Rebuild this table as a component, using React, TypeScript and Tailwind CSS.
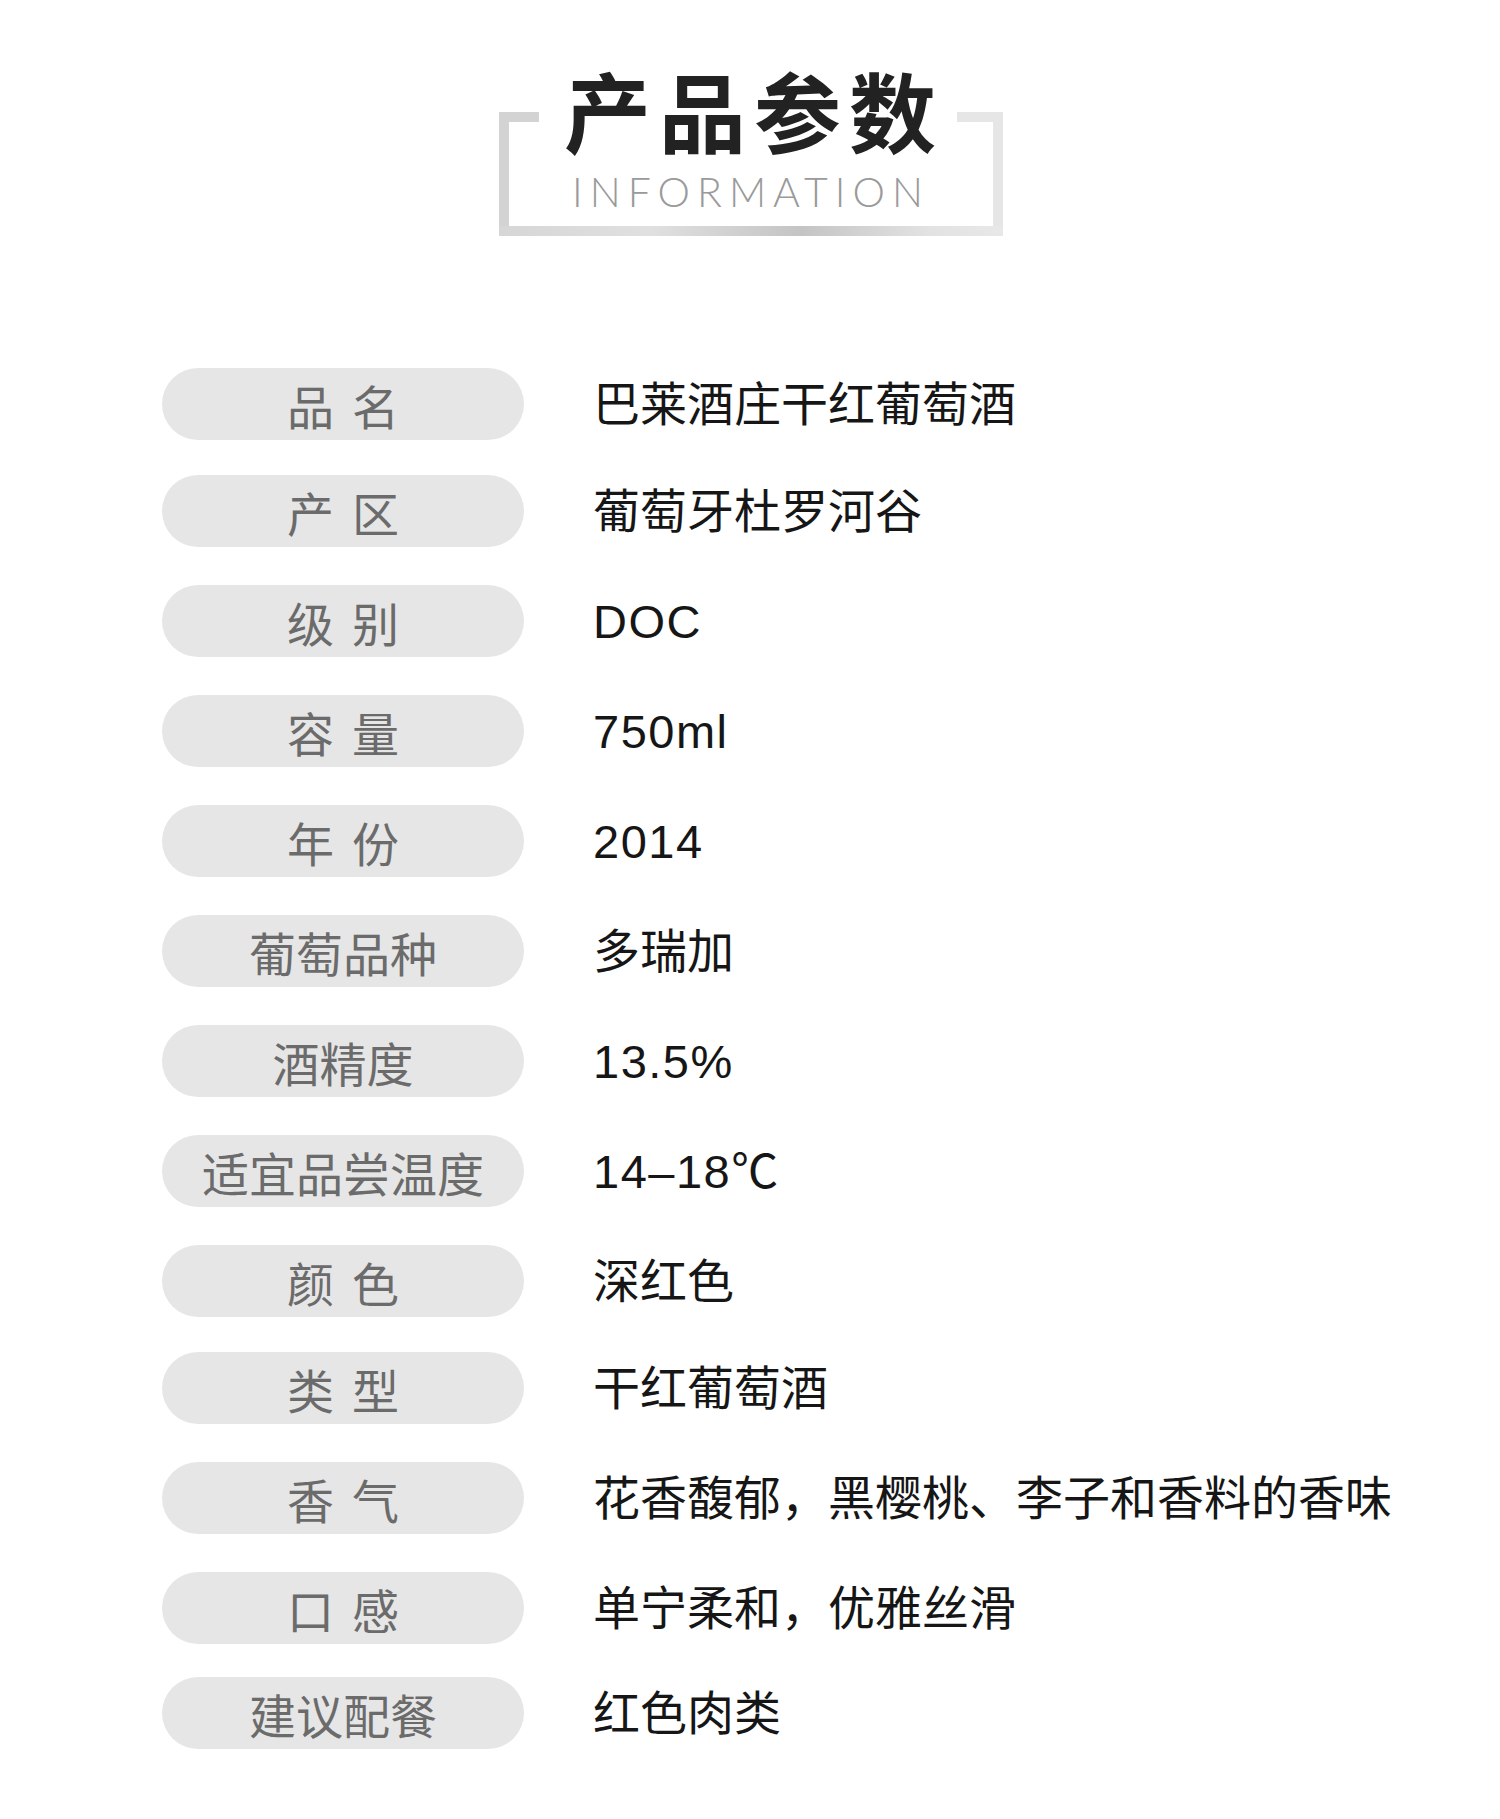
import React from "react";

const rows: { label: string; value: string; mt: number; latin?: boolean }[] = [
  { label: "品名", value: "巴莱酒庄干红葡萄酒", mt: 0 },
  { label: "产区", value: "葡萄牙杜罗河谷", mt: 35 },
  { label: "级别", value: "DOC", mt: 38, latin: true },
  { label: "容量", value: "750ml", mt: 38, latin: true },
  { label: "年份", value: "2014", mt: 38, latin: true },
  { label: "葡萄品种", value: "多瑞加", mt: 38 },
  { label: "酒精度", value: "13.5%", mt: 38, latin: true },
  { label: "适宜品尝温度", value: "14–18℃", mt: 38, latin: true },
  { label: "颜色", value: "深红色", mt: 38 },
  { label: "类型", value: "干红葡萄酒", mt: 35 },
  { label: "香气", value: "花香馥郁，黑樱桃、李子和香料的香味", mt: 38 },
  { label: "口感", value: "单宁柔和，优雅丝滑", mt: 38 },
  { label: "建议配餐", value: "红色肉类", mt: 33 },
];

const mtClass: Record<number, string> = {
  0: "mt-0",
  33: "mt-[33px]",
  35: "mt-[35px]",
  38: "mt-[38px]",
};

function Label({ text }: { text: string }) {
  const chars = Array.from(text);
  if (chars.length === 2) {
    return (
      <div className="flex gap-[18px]">
        <span>{chars[0]}</span>
        <span>{chars[1]}</span>
      </div>
    );
  }
  return <span>{text}</span>;
}

export default function App() {
  return (
    <div
      className="w-[1500px] h-[1819px] bg-white overflow-hidden"
      style={{ fontFamily: '"Liberation Sans", "Noto Sans CJK SC", sans-serif' }}
    >
      {/* Header */}
      <div className="pt-[112px] flex justify-center">
        <div className="w-[504px] flex flex-col ml-[2px]">
          <div className="flex h-[10px] justify-between">
            <div className="w-[40px] h-[10px] bg-[#d3d3d3]" />
            <div className="w-[46px] h-[10px] bg-[#e6e6e6]" />
          </div>
          <div className="flex h-[104px]">
            <div className="w-[10px] bg-[#d3d3d3]" />
            <div className="flex-1 flex flex-col items-center">
              <div
                className="-mt-[56px] text-[87px] leading-none font-bold text-[#222222] tracking-[8px] pl-[6px]"
                style={{ fontFamily: '"Noto Sans CJK SC", sans-serif' }}
              >
                产品参数
              </div>
              <div
                className="mt-[18px] text-[41px] leading-none font-light text-[#9a9a9a] tracking-[7px]"
                style={{ fontFamily: 'Lato, "Noto Sans", sans-serif' }}
              >
                INFORMATION
              </div>
            </div>
            <div className="w-[10px] bg-[#e6e6e6]" />
          </div>
          <div className="h-[10px] bg-[linear-gradient(90deg,#d6d6d6_0%,#e0e0e0_30%,#c4c4c4_60%,#e2e2e2_85%,#e8e8e8_100%)]" />
        </div>
      </div>

      {/* Rows */}
      <div className="mt-[132px] flex flex-col">
        {rows.map((r) => (
          <div key={r.label} className={`flex items-center ${mtClass[r.mt]}`}>
            <div
              className="ml-[162px] w-[362px] h-[72px] rounded-full bg-[#e6e6e6] flex items-center justify-center text-[47px] leading-none text-[#6b6b6b]"
              style={{ fontFamily: '"Noto Sans CJK SC", sans-serif' }}
            >
              <Label text={r.label} />
            </div>
            <div
              className={`ml-[69px] text-[47px] leading-none text-[#161616] whitespace-nowrap ${
                r.latin ? "tracking-[1.5px]" : ""
              }`}
            >
              {r.value}
            </div>
          </div>
        ))}
      </div>
    </div>
  );
}
